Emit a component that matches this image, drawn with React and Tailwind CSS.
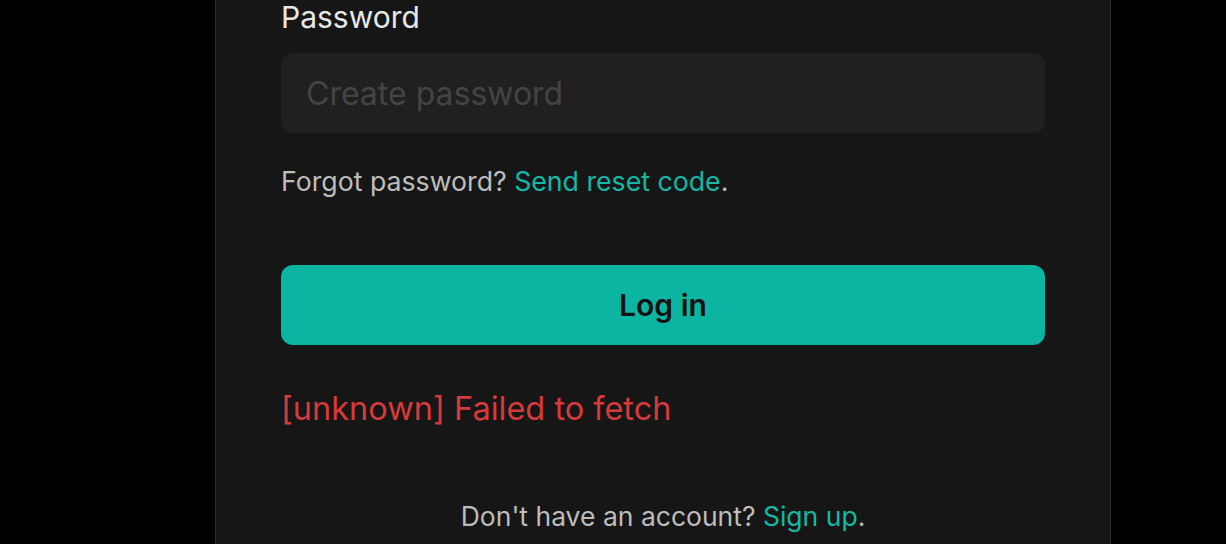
import React from "react";

export default function App() {
  return (
    <div
      className="min-h-[544px] bg-black flex pl-[215px] overflow-hidden"
      style={{ fontFamily: "Inter, 'Noto Sans', sans-serif" }}
    >
      <div className="w-[896px] min-h-[600px] bg-[#161616] border-x border-[#2e2e2e] px-[65px]">
        <label className="block text-[30px] leading-[34px] text-[#e8e8e8]">Password</label>
        <input
          type="password"
          placeholder="Create password"
          className="mt-[19px] w-full h-[80px] rounded-xl bg-[#202020] px-[25px] text-[32px] text-[#e8e8e8] placeholder:text-[#444444] outline-none"
        />
        <p className="mt-[31px] text-[26.7px] leading-[34px] text-[#bdbdbd]">
          Forgot password? <a className="text-[#14b8a6]">Send reset code</a>.
        </p>
        <button className="mt-[67px] w-full h-[80px] rounded-xl bg-[#0bb5a2] text-[30px] font-semibold text-[#111111]">
          Log in
        </button>
        <p className="mt-[47px] text-[32.5px] leading-[34px] text-[#d63a3b]">[unknown] Failed to fetch</p>
        <p className="mt-[73px] text-center text-[26.5px] leading-[34px] text-[#bdbdbd]">
          Don't have an account? <a className="text-[#14b8a6]">Sign up</a>.
        </p>
      </div>
    </div>
  );
}
